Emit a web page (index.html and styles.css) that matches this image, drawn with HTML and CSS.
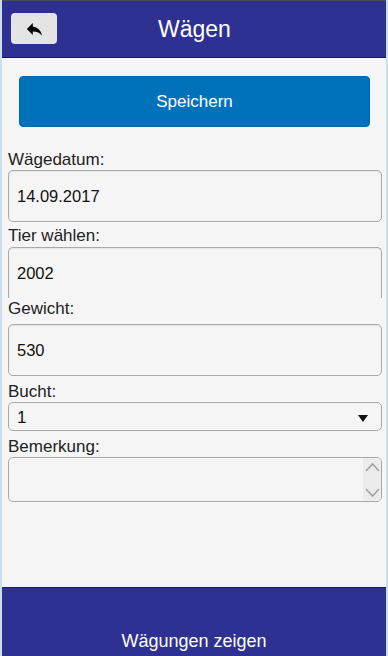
FILE: index.html
```html
<!DOCTYPE html>
<html lang="de">
<head>
    <meta charset="UTF-8">
    <meta name="viewport" content="width=device-width, initial-scale=1.0">
    <title>Wägen</title>
    <link rel="stylesheet" href="styles.css">
</head>
<body>
    <div class="page">
        <div class="header">
            <button class="back-button" type="button" aria-label="Zurück">
                <svg width="17" height="14" viewBox="2 4 20 16">
                    <path d="M10 9V5l-7 7 7 7v-4.1c5 0 8.5 1.6 11 5.1-1-5-4-10-11-11z" fill="#000"/>
                </svg>
            </button>
            <h1>Wägen</h1>
        </div>

        <div class="content">
            <button class="save-button" type="button">Speichern</button>

            <div class="field field-first">
                <label for="datum">Wägedatum:</label>
                <input class="text-input" type="text" id="datum" value="14.09.2017">
            </div>

            <div class="field field-tier">
                <label for="tier">Tier wählen:</label>
                <input class="text-input" type="text" id="tier" value="2002">
            </div>

            <div class="field field-weight">
                <label for="gewicht">Gewicht:</label>
                <input class="text-input" type="text" id="gewicht" value="530">
            </div>

            <div class="field">
                <label>Bucht:</label>
                <div class="select-box">
                    <span>1</span>
                    <svg width="10" height="7" viewBox="0 0 10 7"><path d="M0 0h10L5 7z" fill="#111"/></svg>
                </div>
            </div>

            <div class="field">
                <label for="bemerkung">Bemerkung:</label>
                <div class="memo">
                    <textarea id="bemerkung"></textarea>
                    <div class="scroll">
                        <svg width="15" height="10" viewBox="0 0 15 10"><path d="M1 9l6.5-7 6.5 7" fill="none" stroke="#a4a4a4" stroke-width="1.6"/></svg>
                        <svg width="15" height="10" viewBox="0 0 15 10"><path d="M1 1l6.5 7 6.5-7" fill="none" stroke="#a4a4a4" stroke-width="1.6"/></svg>
                    </div>
                </div>
            </div>
        </div>

        <div class="footer">Wägungen zeigen</div>
    </div>
</body>
</html>
```

FILE: styles.css
```css
body {
    margin: 0;
    padding: 0 2px;
    background-color: #cadeee;
    font-family: 'Liberation Sans', Arial, sans-serif;
    color: #222;
}

.page {
    height: 656px;
    display: flex;
    flex-direction: column;
    background-color: #f5f5f5;
    overflow: hidden;
}

.header {
    height: 56px;
    background-color: #2e3192;
    border-top: 1px solid #4a4a5a;
    border-bottom: 1px solid #16174a;
    display: flex;
    align-items: center;
    padding-left: 9px;
}

.header h1 {
    margin: 0 0 0 101px;
    font-size: 23px;
    font-weight: normal;
    color: #fff;
}

.back-button {
    width: 46px;
    height: 31px;
    margin-top: -1px;
    background-color: #e4e4e4;
    border: none;
    border-radius: 4px;
    display: flex;
    align-items: center;
    justify-content: center;
    padding: 0;
}

.content {
    padding: 0 4px 0 6px;
}

.save-button {
    display: block;
    width: 351px;
    height: 51px;
    margin: 18px 0 0 11px;
    background-color: #0072bc;
    color: #fff;
    border: 1px solid #0066aa;
    border-radius: 4px;
    font-family: inherit;
    font-size: 17px;
}

.field {
    margin-top: 6px;
}

.field label {
    display: block;
    height: 20px;
    line-height: 20px;
    font-size: 17px;
    color: #222;
}

.field-first {
    margin-top: 23px;
}

.field-tier {
    margin-top: 4px;
}

.field-tier .text-input {
    margin-top: 1px;
    height: 51px;
    border-bottom: none;
    border-bottom-left-radius: 0;
    border-bottom-right-radius: 0;
}

.field-weight {
    margin-top: 1px;
}

.field-weight label {
    margin-bottom: 5px;
}

.text-input {
    display: block;
    box-sizing: border-box;
    width: 100%;
    height: 52px;
    padding: 0 8px;
    background-color: #f5f5f5;
    border: 1px solid #a9a9a9;
    border-radius: 5px;
    box-shadow: inset 0 1px 2px rgba(0, 0, 0, 0.06);
    font-family: inherit;
    font-size: 16.5px;
    color: #111;
}

.select-box {
    box-sizing: border-box;
    height: 29px;
    padding: 3px 13px 0 8px;
    border: 1px solid #a9a9a9;
    border-radius: 5px;
    display: flex;
    align-items: center;
    justify-content: space-between;
    font-size: 17px;
    color: #111;
}

.memo {
    box-sizing: border-box;
    height: 45px;
    border: 1px solid #a9a9a9;
    border-radius: 5px;
    display: flex;
    overflow: hidden;
}

.memo textarea {
    flex: 1;
    border: none;
    background: transparent;
    resize: none;
    outline: none;
}

.scroll {
    width: 18px;
    background-color: #ececec;
    display: flex;
    flex-direction: column;
    align-items: center;
    justify-content: space-between;
    padding: 4px 0 3px;
}

.footer {
    margin-top: auto;
    height: 69px;
    box-sizing: border-box;
    background-color: #2e3192;
    border-top: 1px solid #1c1d5c;
    padding-top: 42px;
    line-height: 22px;
    text-align: center;
    font-size: 18px;
    color: #fff;
}
```
